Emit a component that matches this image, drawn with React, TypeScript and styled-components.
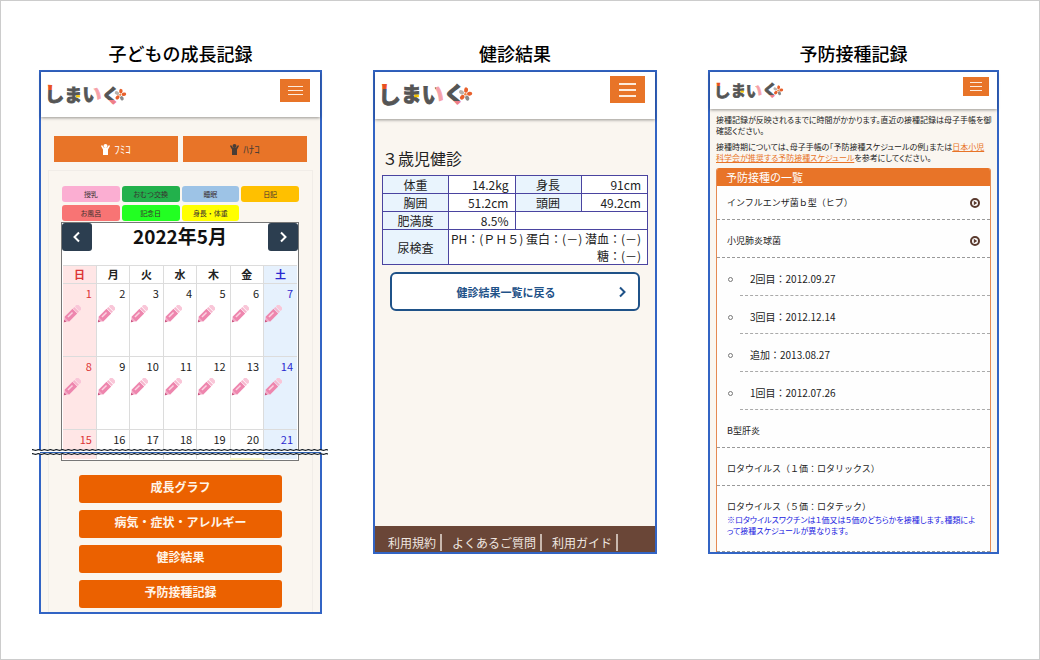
import React from "react";
import styled, { createGlobalStyle, css } from "styled-components";

const GlobalStyle = createGlobalStyle`
  *, *::before, *::after { box-sizing: border-box; }
  body {
    margin: 0;
    background: #fff;
    color: #222;
    font-family: "Noto Sans CJK JP", "Noto Sans", sans-serif;
  }
  h1, h2, h3, p, ul { margin: 0; padding: 0; }
  ul { list-style: none; }
  button { font-family: inherit; padding: 0; border: 0; cursor: pointer; }
`;

const colors = {
  frame: "#3264c4",
  orange: "#e87428",
  action: "#eb6100",
  cream: "#faf6f0",
  navy: "#2c3e50",
  brown: "#6a4637",
};

/* ---------- page ---------- */

const Page = styled.div`
  min-height: 100vh;
  border: 1px solid #ccc;
  padding: 40px 40px 40px 38px;
  display: grid;
  grid-template-columns: minmax(0, 283fr) minmax(0, 284fr) minmax(0, 291fr);
  column-gap: 51px;
  align-items: start;
`;

const Title = styled.h1`
  margin-bottom: 5px;
  font-size: 18px;
  line-height: 24px;
  font-weight: 500;
  color: #000;
  text-align: center;
`;

const Screen = styled.section`
  border: 2px solid ${colors.frame};
  background: ${colors.cream};
  min-height: 484px;
  display: flex;
  flex-direction: column;
`;

/* ---------- screen header ---------- */

type Size = "small" | "medium" | "large";

const headerSizes = {
  small: { height: 37, top: 5, side: 8, button: [26, 19], logo: 67, bar: 12, gap: 3 },
  medium: { height: 45, top: 7, side: 10, button: [30, 23], logo: 79, bar: 15, gap: 3 },
  large: { height: 47, top: 4, side: 10, button: [35, 27], logo: 91, bar: 17, gap: 4 },
};

const HeaderBar = styled.header<{ $size: Size }>`
  display: flex;
  justify-content: space-between;
  align-items: flex-start;
  height: ${({ $size }) => headerSizes[$size].height}px;
  padding: ${({ $size }) => headerSizes[$size].top}px
    ${({ $size }) => headerSizes[$size].side}px 0 6px;
  background: #fff;
  box-shadow: 0 1px 3px rgba(0, 0, 0, 0.4);
`;

const MenuButton = styled.button<{ $size: Size }>`
  display: flex;
  flex-direction: column;
  align-items: center;
  justify-content: center;
  gap: ${({ $size }) => headerSizes[$size].gap}px;
  width: ${({ $size }) => headerSizes[$size].button[0]}px;
  height: ${({ $size }) => headerSizes[$size].button[1]}px;
  background: ${colors.orange};
`;

const MenuBar = styled.span<{ $size: Size }>`
  width: ${({ $size }) => headerSizes[$size].bar}px;
  height: ${({ $size }) => ($size === "large" ? 2 : 1)}px;
  background: #fdebdc;
`;

const LogoArt = styled.svg<{ $size: Size }>`
  display: block;
  width: ${({ $size }) => headerSizes[$size].logo}px;
  overflow: visible;
  font-family: "Noto Sans CJK JP", sans-serif;
  font-weight: 700;
`;

function Logo({ size }: { size: Size }) {
  const id = (name: string) => `${name}-${size}`;
  const url = (name: string) => `url(#${id(name)})`;
  const dark = "#555";
  return (
    <LogoArt $size={size} viewBox="0 0 274 100" role="img" aria-label="しまいぐ">
      <defs>
        <linearGradient id={id("shi")} gradientUnits="userSpaceOnUse" x1="0" y1="0" x2="0" y2="100">
          <stop offset="0.38" stopColor="#e8501e" />
          <stop offset="0.38" stopColor={dark} />
        </linearGradient>
        <linearGradient id={id("i")} gradientUnits="userSpaceOnUse" x1="0" y1="0" x2="274" y2="0">
          <stop offset="0.6" stopColor={dark} />
          <stop offset="0.6" stopColor="#f5a0a8" />
        </linearGradient>
        <linearGradient id={id("ku")} gradientUnits="userSpaceOnUse" x1="0" y1="0" x2="0" y2="100">
          <stop offset="0.74" stopColor={dark} />
          <stop offset="0.74" stopColor="#ee7d88" />
        </linearGradient>
      </defs>
      <text x="-10" y="80" fontSize="70" fill={url("shi")} stroke={url("shi")} strokeWidth="3">し</text>
      <text x="60" y="79" fontSize="62" fill={dark} stroke={dark} strokeWidth="3">ま</text>
      <text x="122" y="80" fontSize="67" fill={url("i")} stroke={url("i")} strokeWidth="3">い</text>
      <text x="189" y="79" fontSize="65" fill={url("ku")} stroke={url("ku")} strokeWidth="4">く</text>
      <rect x="100" y="56" width="14" height="8" fill="#f5c400" />
      <g transform="translate(254 55)">
        {[10, 82, 154, 226, 298].map((angle, i) => (
          <ellipse
            key={angle}
            cx="0"
            cy="-13"
            rx="6"
            ry="8"
            fill={i === 2 ? "#8a8a8a" : i === 4 ? "#b9b2ac" : "#e8602c"}
            transform={`rotate(${angle})`}
          />
        ))}
        <circle r="4" fill="#f08a4a" />
      </g>
    </LogoArt>
  );
}

function Header({ size }: { size: Size }) {
  return (
    <HeaderBar $size={size}>
      <Logo size={size} />
      <MenuButton $size={size} type="button" aria-label="メニュー">
        <MenuBar $size={size} />
        <MenuBar $size={size} />
        <MenuBar $size={size} />
      </MenuButton>
    </HeaderBar>
  );
}

/* ---------- growth record ---------- */

const ChildTabs = styled.div`
  display: grid;
  grid-template-columns: 1fr 1fr;
  gap: 5px;
  padding: 19px 13px 8px;
`;

const ChildTab = styled.button<{ $dark?: boolean }>`
  display: flex;
  align-items: center;
  justify-content: center;
  gap: 4px;
  height: 26px;
  font-size: 11px;
  line-height: 16px;
  color: ${({ $dark }) => ($dark ? "#4a3d36" : "#fff")};
  background: ${colors.orange};
`;

const ChildIcon = () => (
  <svg width="9" height="11" viewBox="0 0 18 22" fill="currentColor" aria-hidden="true">
    <circle cx="9" cy="4" r="4" />
    <path d="M0 4 L2 2 L6 7.5 H12 L16 2 L18 4 L14 11 V22 H4 V11 Z" />
  </svg>
);

const RecordBox = styled.div`
  flex: 1;
  margin: 0 7px;
  padding: 15px 13px 4px;
  border: 1px solid #f1ede8;
  border-bottom: 0;
`;

const Tags = styled.ul`
  display: grid;
  grid-template-columns: repeat(4, 1fr);
  gap: 3px 2px;
  margin-bottom: 1px;
`;

const Tag = styled.li<{ $color: string }>`
  height: 16px;
  border-radius: 3px;
  font-size: 7px;
  line-height: 16px;
  text-align: center;
  color: #3a3030;
  background: ${({ $color }) => $color};
`;

const Calendar = styled.div`
  position: relative;
  margin-left: -1px;
  margin-bottom: 14px;
  padding: 0 1px;
  border: 1px solid #777;
  background: #fff;
`;

const MonthBar = styled.div`
  display: flex;
  justify-content: space-between;
  align-items: flex-start;
  height: 42px;
  margin: 0 -1px;
`;

const MonthName = styled.h2`
  font-size: 19px;
  line-height: 26px;
  font-weight: 700;
  color: #111;
`;

const MonthButton = styled.button`
  display: flex;
  align-items: center;
  justify-content: center;
  width: 30px;
  height: 28px;
  border-radius: 3px;
  color: #fff;
  background: ${colors.navy};
`;

const Chevron = ({ left, size = 12 }: { left?: boolean; size?: number }) => (
  <svg width={size} height={size} viewBox="0 0 12 12" fill="none" stroke="currentColor" strokeWidth="2" aria-hidden="true">
    <path d={left ? "M8 1.5 L3.5 6 L8 10.5" : "M4 1.5 L8.5 6 L4 10.5"} />
  </svg>
);

const Month = styled.table`
  width: 100%;
  table-layout: fixed;
  border-collapse: collapse;
`;

const dayTone = css<{ $day: number }>`
  color: ${({ $day }) => ($day === 0 ? "#dc3535" : $day === 6 ? "#2a2ad0" : "#222")};
  background: ${({ $day }) => ($day === 0 ? "#ffe6e6" : $day === 6 ? "#e6f1fd" : "#fff")};
`;

const Weekday = styled.th<{ $day: number }>`
  ${dayTone}
  height: 18px;
  padding: 0;
  border: 1px solid #dcdcdc;
  border-width: 1px 0 1px 1px;
  font-size: 11px;
  line-height: 17px;
  font-weight: 700;
  &:first-child { border-left: 0; }
`;

const Day = styled.td<{ $day: number; $last: boolean; $marked: boolean }>`
  ${dayTone}
  height: ${({ $last }) => ($last ? 29 : 73)}px;
  padding: 1px 4px 0 0;
  border-left: 1px solid #dcdcdc;
  border-top: 1px solid #dcdcdc;
  border-bottom: ${({ $marked }) => ($marked ? "2px solid #fdf8cc" : "0")};
  font-size: 11px;
  line-height: 16px;
  text-align: right;
  vertical-align: top;
  &:first-child { border-left: 0; }
`;

const PencilArt = styled.svg`
  display: block;
  width: 18px;
  height: 18px;
  margin-top: 4px;
`;

const Pencil = () => (
  <PencilArt viewBox="0 0 18 18" aria-hidden="true">
    <g transform="rotate(-45 9 9)">
      <path d="M-2.5 9 L1.5 6.2 V11.8 Z" fill="#f3a6c4" />
      <path d="M-2.5 9 L-0.5 7.6 V10.4 Z" fill="#c8557f" />
      <rect x="1.5" y="5.7" width="11.5" height="6.6" fill="#ee86ae" />
      <rect x="4" y="7.5" width="6.5" height="1.5" fill="#fbd3e1" />
      <rect x="13.6" y="5.7" width="2" height="6.6" fill="#f6b4cc" />
      <rect x="16.2" y="5.7" width="3.8" height="6.6" rx="1" fill="#f9c6d8" />
    </g>
  </PencilArt>
);

const TearLine = styled.div`
  position: absolute;
  left: -30px;
  right: -30px;
  bottom: 4px;
  height: 8px;
  svg { display: block; }
`;

const Tear = () => (
  <TearLine>
    <svg width="100%" height="8" aria-hidden="true">
      <defs>
        <pattern id="wave" width="6" height="8" patternUnits="userSpaceOnUse">
          <rect y="2" width="6" height="4" fill="#fff" />
          <path d="M-1 2 Q0.5 1.2 2 2 T5 2 T8 2" fill="none" stroke="#101820" strokeWidth="1.2" />
          <path d="M-1 6 Q0.5 5.2 2 6 T5 6 T8 6" fill="none" stroke="#101820" strokeWidth="1.2" />
        </pattern>
      </defs>
      <rect width="100%" height="8" fill="url(#wave)" />
      <rect x="8" y="4" width="95%" height="1" fill="#2c5fb0" />
    </svg>
  </TearLine>
);

const Actions = styled.div`
  display: grid;
  gap: 7px;
  margin: 0 17px;
`;

const Action = styled.button`
  height: 28px;
  padding-bottom: 3px;
  border-radius: 3px;
  font-size: 12px;
  line-height: 18px;
  font-weight: 700;
  color: #fff4e8;
  background: ${colors.action};
`;

const tags = [
  ["授乳", "#fbaed2"],
  ["おむつ交換", "#22b14c"],
  ["睡眠", "#9dc3e6"],
  ["日記", "#ffc000"],
  ["お風呂", "#f87474"],
  ["記念日", "#22ff22"],
  ["身長・体重", "#ffff00"],
];
const weekdays = ["日", "月", "火", "水", "木", "金", "土"];
const weeks = [0, 1, 2].map((w) => weekdays.map((_, d) => w * 7 + d + 1));
const actions = ["成長グラフ", "病気・症状・アレルギー", "健診結果", "予防接種記録"];

function GrowthRecord() {
  return (
    <Screen>
      <Header size="medium" />
      <ChildTabs>
        <ChildTab type="button"><ChildIcon />ﾌﾐｺ</ChildTab>
        <ChildTab type="button" $dark><ChildIcon />ﾊﾅｺ</ChildTab>
      </ChildTabs>
      <RecordBox>
        <Tags>
          {tags.map(([name, color]) => <Tag key={name} $color={color}>{name}</Tag>)}
        </Tags>
        <Calendar>
          <MonthBar>
            <MonthButton type="button" aria-label="前の月"><Chevron left /></MonthButton>
            <MonthName>2022年5月</MonthName>
            <MonthButton type="button" aria-label="次の月"><Chevron /></MonthButton>
          </MonthBar>
          <Month>
            <thead>
              <tr>{weekdays.map((name, d) => <Weekday key={name} $day={d}>{name}</Weekday>)}</tr>
            </thead>
            <tbody>
              {weeks.map((days, w) => (
                <tr key={w}>
                  {days.map((n, d) => (
                    <Day key={n} $day={d} $last={w === 2} $marked={n === 20}>
                      {n}
                      {w < 2 && <Pencil />}
                    </Day>
                  ))}
                </tr>
              ))}
            </tbody>
          </Month>
          <Tear />
        </Calendar>
        <Actions>
          {actions.map((name) => <Action key={name} type="button">{name}</Action>)}
        </Actions>
      </RecordBox>
    </Screen>
  );
}

/* ---------- checkup result ---------- */

const CheckupMain = styled.div`
  flex: 1;
  padding: 28px 7px 0;
`;

const CheckupTitle = styled.h2`
  margin-bottom: 6px;
  font-size: 16px;
  line-height: 22px;
  font-weight: 400;
`;

const Results = styled.table`
  width: 100%;
  table-layout: fixed;
  border-collapse: collapse;
  font-size: 12px;
  line-height: 17px;
  background: #fff;
  th, td {
    height: 17px;
    padding: 0;
    border: 1px solid #4a44a0;
    font-weight: 400;
  }
  th { background: #e9f4fd; }
  td { padding-right: 6px; text-align: right; }
`;

const BackButton = styled.button`
  display: grid;
  grid-template-columns: 1fr 12px;
  align-items: center;
  width: calc(100% - 16px);
  height: 39px;
  margin: 7px 8px 0;
  padding: 0 10px 0 4px;
  border: 2px solid #1f5288;
  border-radius: 6px;
  font-size: 11px;
  line-height: 18px;
  font-weight: 700;
  color: #1f5288;
  background: #fff;
`;

const Footer = styled.footer`
  display: flex;
  gap: 10px;
  height: 26px;
  padding: 8px 0 0 13px;
  background: ${colors.brown};
`;

const FooterLink = styled.a`
  height: 17px;
  padding-right: 4px;
  border-right: 2px solid #c9b8ae;
  font-size: 12px;
  line-height: 17px;
  color: #efe6e0;
  text-decoration: none;
  white-space: nowrap;
`;

function CheckupResult() {
  return (
    <Screen>
      <Header size="large" />
      <CheckupMain>
        <CheckupTitle>３歳児健診</CheckupTitle>
        <Results>
          <tbody>
            <tr><th>体重</th><td>14.2kg</td><th>身長</th><td>91cm</td></tr>
            <tr><th>胸囲</th><td>51.2cm</td><th>頭囲</th><td>49.2cm</td></tr>
            <tr><th>肥満度</th><td>8.5%</td><td colSpan={2} /></tr>
            <tr>
              <th>尿検査</th>
              <td colSpan={3}>PH：(ＰＨ５) 蛋白：(－) 潜血：(－)<br />糖：(－)</td>
            </tr>
          </tbody>
        </Results>
        <BackButton type="button">
          健診結果一覧に戻る
          <Chevron />
        </BackButton>
      </CheckupMain>
      <Footer>
        <FooterLink href="#terms">利用規約</FooterLink>
        <FooterLink href="#faq">よくあるご質問</FooterLink>
        <FooterLink href="#guide">利用ガイド</FooterLink>
      </Footer>
    </Screen>
  );
}

/* ---------- vaccination record ---------- */

const VaccineMain = styled.div`
  padding: 5px 6px 0;
`;

const smallText = css`
  font-size: 8px;
  line-height: 11px;
  font-feature-settings: "palt";
  white-space: nowrap;
`;

const Note = styled.p`
  ${smallText}
  margin-bottom: 5px;
  a { color: ${colors.orange}; }
`;

const VaccineBox = styled.div`
  border: 1px solid #e58a52;
  border-width: 0 1px;
  border-radius: 3px 3px 0 0;
  overflow: hidden;
  background: #fefefe;
`;

const VaccineTitle = styled.h2`
  padding-left: 9px;
  font-size: 11px;
  line-height: 18px;
  font-weight: 400;
  color: #fff;
  background: ${colors.orange};
`;

const VaccineRow = styled.li`
  padding: 14px 10px 9px;
  border-bottom: 1px dashed #999;
  font-size: 9px;
  line-height: 14px;
  &:first-child { padding-top: 10px; }
`;

const VaccineName = styled.div`
  display: flex;
  justify-content: space-between;
  align-items: center;
`;

const Caution = styled.p`
  ${smallText}
  margin-bottom: 6px;
  color: #2222e0;
`;

const DoseRow = styled.li`
  display: flex;
  align-items: center;
`;

const Bullet = styled.span`
  width: 5px;
  height: 5px;
  margin: 4px 7px 0 11px;
  border: 1px solid #777;
  border-radius: 50%;
`;

const Dose = styled.span`
  flex: 1;
  padding: 14px 10px 9px;
  border-bottom: 1px dashed #aaa;
  font-size: 10px;
  line-height: 14px;
`;

const PlayIcon = () => (
  <svg width="10" height="10" viewBox="0 0 10 10" aria-hidden="true">
    <circle cx="5" cy="5" r="4" fill="#fff" stroke="#5a3a2e" strokeWidth="2" />
    <path d="M3.8 2.8 L7.2 5 L3.8 7.2 Z" fill="#5a3a2e" />
  </svg>
);

const doses = ["2回目：2012.09.27", "3回目：2012.12.14", "追加：2013.08.27", "1回目：2012.07.26"];

function VaccinationRecord() {
  return (
    <Screen>
      <Header size="small" />
      <VaccineMain>
        <Note>
          接種記録が反映されるまでに時間がかかります。直近の接種記録は母子手帳を御<br />
          確認ください。
        </Note>
        <Note>
          接種時期については、母子手帳の「予防接種スケジュールの例」または
          <a href="#schedule">日本小児<br />科学会が推奨する予防接種スケジュール</a>
          を参考にしてください。
        </Note>
        <VaccineBox>
          <VaccineTitle>予防接種の一覧</VaccineTitle>
          <ul>
            <VaccineRow><VaccineName>インフルエンザ菌ｂ型（ヒブ）<PlayIcon /></VaccineName></VaccineRow>
            <VaccineRow><VaccineName>小児肺炎球菌<PlayIcon /></VaccineName></VaccineRow>
            {doses.map((text) => (
              <DoseRow key={text}><Bullet /><Dose>{text}</Dose></DoseRow>
            ))}
            <VaccineRow><VaccineName>B型肝炎</VaccineName></VaccineRow>
            <VaccineRow><VaccineName>ロタウイルス（１価：ロタリックス）</VaccineName></VaccineRow>
            <VaccineRow>
              <VaccineName>ロタウイルス（５価：ロタテック）</VaccineName>
              <Caution>
                ※ロタウイルスワクチンは１価又は５価のどちらかを接種します。種類によ<br />
                って接種スケジュールが異なります。
              </Caution>
            </VaccineRow>
          </ul>
        </VaccineBox>
      </VaccineMain>
    </Screen>
  );
}

export default function App() {
  return (
    <>
      <GlobalStyle />
      <Page lang="ja">
        <div><Title>子どもの成長記録</Title><GrowthRecord /></div>
        <div><Title>健診結果</Title><CheckupResult /></div>
        <div><Title>予防接種記録</Title><VaccinationRecord /></div>
      </Page>
    </>
  );
}
